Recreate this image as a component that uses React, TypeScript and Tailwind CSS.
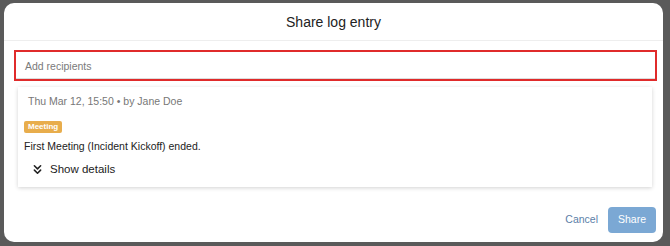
import { ChevronsDown } from "lucide-react";

export default function App() {
  return (
    <div className="w-[670px] h-[246px] bg-[#5a5a5a] pt-[3px] pl-[4px] pr-[7px] pb-[4px] font-['Liberation_Sans',Arial,sans-serif]">
      <div className="h-full bg-white rounded-[10px] flex flex-col">
        <div className="h-[38px] pt-[1px] flex items-center justify-center text-[14px] text-[#222] border-b border-[#eeeeee]">
          Share log entry
        </div>
        <div className="mt-[9px] ml-[10px] mr-[6px] h-[31px] border-2 border-[#e02b2b]">
          <div className="h-[27px] pt-[3px] border-b border-[#dcdcdc] flex items-center pl-[9px] text-[10.5px] text-[#7a7a7a]">
            Add recipients
          </div>
        </div>
        <div className="mt-[6px] ml-[14px] mr-[11px] h-[100px] bg-white shadow-[0_1px_4px_rgba(0,0,0,0.18)] pl-[6px] pt-[6px]">
          <div className="pl-[4px] text-[10.5px] leading-[16px] text-[#777]">
            Thu Mar 12, 15:50 • by Jane Doe
          </div>
          <div className="mt-[12px] inline-flex h-[12px] items-center rounded-[2px] bg-[#e8ad4c] px-[4px] text-[8px] font-bold text-white">
            Meeting
          </div>
          <div className="mt-[2px] text-[10.5px] leading-[16px] text-[#222]">
            First Meeting (Incident Kickoff) ended.
          </div>
          <div className="mt-[7px] flex items-center gap-[5px] pl-[6px] text-[11.5px] leading-[16px] text-[#222]">
            <ChevronsDown size={15} strokeWidth={2.5} />
            Show details
          </div>
        </div>
        <div className="mt-auto mb-[9px] mr-[7px] flex items-center justify-end gap-[10px]">
          <span className="text-[10.5px] text-[#5b80a8]">Cancel</span>
          <div className="w-[48px] h-[26px] rounded-[4px] bg-[#7ba8d4] flex items-center justify-center text-[10.5px] text-white">
            Share
          </div>
        </div>
      </div>
    </div>
  );
}
